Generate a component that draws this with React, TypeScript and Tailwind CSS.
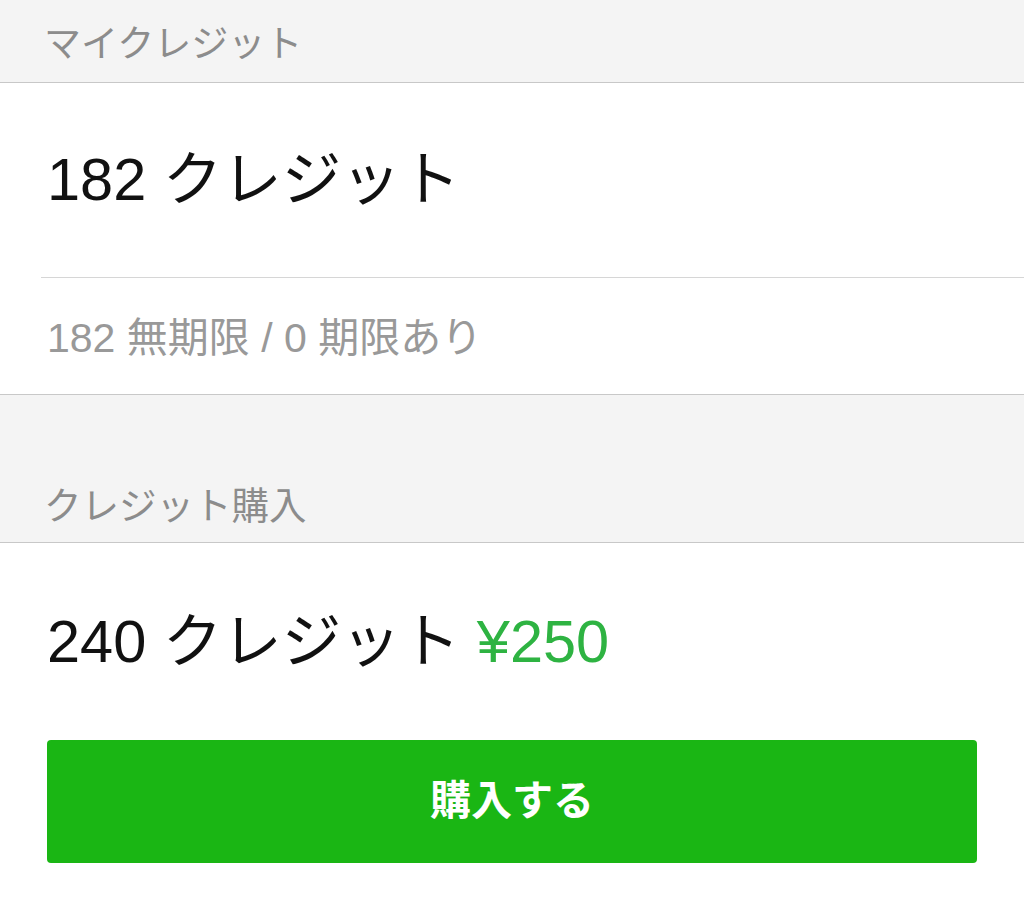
export default function App() {
  const font = { fontFamily: '"Liberation Sans", "Noto Sans CJK JP", sans-serif' };

  return (
    <div className="w-[1024px] h-[908px] bg-white overflow-hidden" style={font}>
      {/* マイクレジット */}
      <div className="h-[83px] bg-[#f4f4f4] border-b border-[#c8c8c8] px-[44px] pt-[6px] flex items-center">
        <span className="text-[37px] leading-none text-[#8c8c8c]">マイクレジット</span>
      </div>

      <div className="bg-white border-b border-[#c8c8c8]">
        <div className="h-[195px] flex items-center border-b border-[#d6d6d6] ml-[41px] pl-[6px]">
          <span className="text-[59.5px] leading-none text-[#111]">182 クレジット</span>
        </div>
        <div className="h-[116px] px-[47px] pt-[4px] flex items-center">
          <span className="text-[41px] leading-none text-[#999]">182 無期限 / 0 期限あり</span>
        </div>
      </div>

      {/* クレジット購入 */}
      <div className="h-[148px] bg-[#f4f4f4] border-b border-[#c8c8c8] px-[44px] flex items-end pb-[17px]">
        <span className="text-[37.5px] leading-none text-[#8c8c8c]">クレジット購入</span>
      </div>

      <div className="px-[47px]">
        <div className="h-[197px] flex items-center">
          <span className="text-[59.5px] leading-none text-[#111]">
            240 クレジット <span className="text-[#2eb342]">¥250</span>
          </span>
        </div>
        <button className="w-[930px] h-[123px] bg-[#1ab614] rounded-[4px] text-white text-[41px] font-bold flex items-center justify-center">
          購入する
        </button>
      </div>
    </div>
  );
}
